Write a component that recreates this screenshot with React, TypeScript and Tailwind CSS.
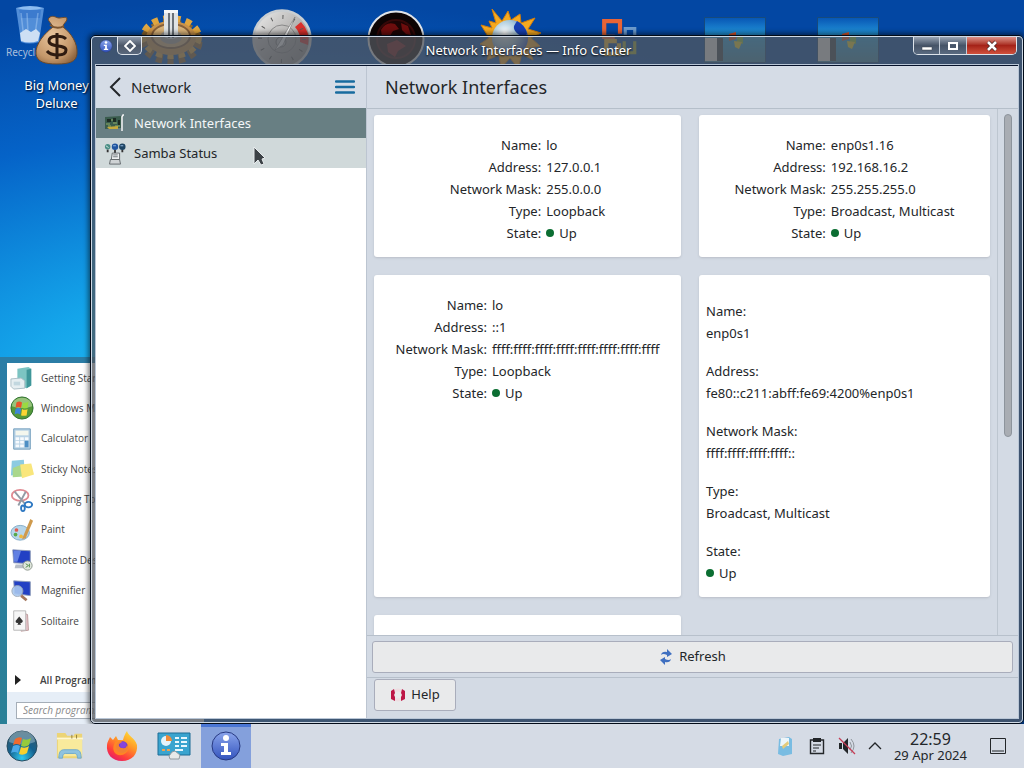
import React from "react";

type IconProps = { className?: string };

const RecycleBin = ({ className }: IconProps) => (
  <svg viewBox="0 0 32 40" className={className} aria-hidden="true">
    <path d="M2 3 L30 3 L25 37 Q15 40 7 37 Z" fill="#5f9ae0" opacity=".85" />
    <path d="M5 5h22l-1 8H7z" fill="#2e6fc8" opacity=".6" />
    <path d="M7 8l3 26M13 8l1 20M24 8l-3 22" stroke="#b9d8fa" strokeWidth="1.5" opacity=".4" />
    <path d="M6 28l6-4 5 3 5-3 4 4-2 8q-9 3-17 0z" fill="#cddff4" />
    <path d="M2 3q14-4 28 0q-14 4-28 0z" fill="#8dbcf0" />
  </svg>
);

const MoneyBag = ({ className }: IconProps) => (
  <svg viewBox="0 0 44 50" className={className} aria-hidden="true">
    <defs>
      <radialGradient id="bag" cx=".4" cy=".4" r=".7">
        <stop offset="0" stopColor="#e8c49c" />
        <stop offset=".7" stopColor="#c4976a" />
        <stop offset="1" stopColor="#8f6640" />
      </radialGradient>
    </defs>
    <path d="M18 12C15 6 11 5 15 2c4-2 6 1 9 1s8-2 8 1c0 3-4 4-4 8 8 6 15 16 14 27-1 8-8 10-20 10S2 47 1 39C0 29 10 18 18 12z" fill="url(#bag)" stroke="#6d4a2a" />
    <path d="M15 10q7 5 14 1" stroke="#7b5430" strokeWidth="2" fill="none" />
    <path d="M31 24c-4-4-17-4-17 2 0 7 17 3 17 9 0 7-15 6-19 1" stroke="#2f1b10" strokeWidth="3" fill="none" />
    <path d="M22 18v26" stroke="#2f1b10" strokeWidth="3" />
  </svg>
);

const Gear = ({ className }: IconProps) => (
  <svg viewBox="0 0 64 56" className={className} aria-hidden="true">
    <ellipse cx="32" cy="34" rx="27" ry="18" fill="none" stroke="#8a6630" strokeWidth="9" strokeDasharray="6 5" />
    <ellipse cx="32" cy="29" rx="27" ry="18" fill="none" stroke="#e0a640" strokeWidth="8" strokeDasharray="6 5" />
    <ellipse cx="32" cy="30" rx="25" ry="17" fill="#c9924a" />
    <ellipse cx="32" cy="28" rx="19" ry="12" fill="#d9b37a" stroke="#87603a" strokeWidth="2" />
    <ellipse cx="32" cy="29" rx="11" ry="7" fill="#a9a39a" />
    <path d="M25 2h14v27q-7 4-14 0z" fill="#dfe3e6" />
    <path d="M30 5v25M34 5v25" stroke="#444c54" strokeWidth="1.5" />
    <path d="M25 2h14v3H25z" fill="#f5f7f8" />
  </svg>
);

const Gauge = ({ className }: IconProps) => (
  <svg viewBox="0 0 60 60" className={className} aria-hidden="true">
    <defs>
      <linearGradient id="dial" x1="0" y1="0" x2="1" y2="1">
        <stop offset="0" stopColor="#efefef" />
        <stop offset=".6" stopColor="#aaa8a6" />
        <stop offset="1" stopColor="#858585" />
      </linearGradient>
    </defs>
    <circle cx="30" cy="30" r="28.5" fill="url(#dial)" stroke="#c9ced2" strokeWidth="2.5" />
    <path d="M43 18L49 13A26 26 0 0 1 56 36L48 33A19 19 0 0 0 43 18z" fill="#d8302c" />
    <circle cx="30" cy="30" r="22" fill="none" stroke="#5a5a5a" strokeWidth="4" strokeDasharray="1 10.5" />
    <circle cx="30" cy="30" r="14" fill="none" stroke="#888" strokeWidth="1" />
    <circle cx="29" cy="33" r="5" fill="#c6c6c6" stroke="#777" />
    <path d="M23 41L43 8L31 36z" fill="#fafafa" stroke="#707070" strokeWidth=".6" />
  </svg>
);

const RedOrb = ({ className }: IconProps) => (
  <svg viewBox="0 0 58 58" className={className} aria-hidden="true">
    <circle cx="29" cy="29" r="27.5" fill="#0c0404" stroke="#dfe3e8" strokeWidth="2" />
    <circle cx="29" cy="29" r="19" fill="#1d0404" stroke="#350808" strokeWidth="2" />
    <path d="M14 20q5-9 14-6l4 5-6 2-3 5-8 1zM34 13l7 3 3 9-5-1-4-4zM20 34l10-4 9 6-8 5-3 6-7-5z" fill="#6d0d0d" />
  </svg>
);

const SunGlobe = ({ className }: IconProps) => (
  <svg viewBox="0 0 64 64" className={className} aria-hidden="true">
    <defs>
      <radialGradient id="globe" cx=".35" cy=".35" r=".7">
        <stop offset="0" stopColor="#fff" />
        <stop offset=".5" stopColor="#a7c9dc" />
        <stop offset="1" stopColor="#2b57c0" />
      </radialGradient>
    </defs>
    <path d="M14 2L24 14L30 4L33 13L42 7L43 16L57 11L50 22L63 26L53 31L62 39L51 41L55 53L44 47L40 61L32 51L23 61L21 48L9 53L12 41L2 37L11 31L3 18L14 21L11 14L18 16z" fill="#f5a920" stroke="#d27d0c" />
    <circle cx="32" cy="31" r="18" fill="url(#globe)" />
    <path d="M39 14A18 18 0 0 1 49 27Q45 31 40 27T36 19z" fill="#1740b2" />
  </svg>
);

const OfficeLogo = ({ className }: IconProps) => (
  <svg viewBox="0 0 38 38" className={className} aria-hidden="true" fill="none" strokeWidth="4">
    <path d="M14 18H4V3h15v12" stroke="#e86436" />
    <path d="M24 16V10h9v8" stroke="#6d9bcc" strokeWidth="3" />
    <path d="M16 22H6v12h12V24" stroke="#f0b92c" />
    <path d="M23 22v11h10V22" stroke="#a0ad35" strokeWidth="3" />
  </svg>
);

const Thumb = ({ className }: IconProps) => (
  <svg viewBox="0 0 62 46" className={className} aria-hidden="true">
    <defs>
      <linearGradient id="wall" x1="0" y1="0" x2="0" y2="1">
        <stop offset="0" stopColor="#0755b4" />
        <stop offset=".45" stopColor="#28a1e0" />
        <stop offset="1" stopColor="#3c87a8" />
      </linearGradient>
    </defs>
    <path d="M.5.5h61v45H.5z" fill="url(#wall)" stroke="#164a7c" />
    <path d="M1 21h12v23H1z" fill="#eceae7" />
    <path d="M13 21h6v23h-6z" fill="#39434e" />
    <path d="M25 17l7-2v7l-7 2z" fill="#e0562a" />
    <path d="M33 18l6 2v7l-6-2z" fill="#86c440" />
    <path d="M30 24l8 1-3 7-4-2z" fill="#eed72e" />
  </svg>
);

const WindowsOrb = ({ className }: IconProps) => (
  <svg viewBox="0 0 32 32" className={className} aria-hidden="true">
    <defs>
      <radialGradient id="orb" cx=".5" cy=".9" r=".9">
        <stop offset="0" stopColor="#31c9f0" />
        <stop offset=".5" stopColor="#14618f" />
        <stop offset="1" stopColor="#365a6c" />
      </radialGradient>
    </defs>
    <circle cx="16" cy="16" r="15" fill="url(#orb)" stroke="#264c61" />
    <path d="M3 12a13 11 0 0 1 26 0q-13 5-26 0z" fill="#dbeaf0" opacity=".35" />
    <path d="M9 9q4-3 7-1l-2 7q-3-2-7 0z" fill="#ef6a2d" />
    <path d="M17 9q4 2 8-1l-2 7q-4 3-8 1z" fill="#95ca3c" />
    <path d="M7 16q4-2 7 0l-2 7q-3-2-7 0z" fill="#4aa8e8" />
    <path d="M15 17q4 2 8-1l-2 7q-4 3-8 1z" fill="#fad02e" />
  </svg>
);

const GreenOrb = ({ className }: IconProps) => (
  <svg viewBox="0 0 26 26" className={className} aria-hidden="true">
    <circle cx="13" cy="13" r="12" fill="#55993b" stroke="#2b6c2e" />
    <path d="M2 11a11 9 0 0 1 22 0q-11 4-22 0z" fill="#c3e0a9" opacity=".6" />
    <path d="M7 7q3-2 6 0l-1 6q-3-2-6 0z" fill="#e8542a" />
    <path d="M14 7q3 1 6-1l-1 7q-3 1-6 0z" fill="#9ada40" />
    <path d="M6 14q3-2 6 0l-1 6q-3-2-6 0z" fill="#3d86d8" />
    <path d="M13 14q3 2 6 0l-1 7q-3 1-6 0z" fill="#fcd432" />
  </svg>
);

const GettingStarted = ({ className }: IconProps) => (
  <svg viewBox="0 0 26 26" className={className} aria-hidden="true">
    <path d="M8 3l12-2 3 2v18l-5 3-10-3z" fill="#7cc4c2" />
    <path d="M18 4l5-1v18l-5 3z" fill="#3f9699" />
    <path d="M1 14l11-1 4 3v8l-12 1-3-3z" fill="#e6eef1" stroke="#a9bcc4" />
    <path d="M4 17h7v4H4z" fill="#c2d7df" />
  </svg>
);

const Calculator = ({ className }: IconProps) => (
  <svg viewBox="0 0 26 26" className={className} aria-hidden="true">
    <path d="M4 2h18v22H4z" fill="#b9d3e6" stroke="#6d9abb" />
    <path d="M6 4h14v5H6z" fill="#f4f7ee" />
    <path d="M6 11h4v3H6zM11 11h4v3h-4zM16 11h4v3h-4zM6 15h4v3H6zM11 15h4v3h-4zM6 19h4v3H6zM11 19h4v3h-4z" fill="#f7fbfe" />
    <path d="M16 15h4v7h-4z" fill="#4e8fc4" />
  </svg>
);

const StickyNotes = ({ className }: IconProps) => (
  <svg viewBox="0 0 26 26" className={className} aria-hidden="true">
    <path d="M2 4l13-1 1 15-15 2z" fill="#8ccbe2" />
    <path d="M3 12l10-4 2 13-12 1z" fill="#a9d78c" />
    <path d="M11 8l12-1 3 12-13 4z" fill="#f9e67c" />
  </svg>
);

const Snipping = ({ className }: IconProps) => (
  <svg viewBox="0 0 26 26" className={className} aria-hidden="true" fill="none">
    <ellipse cx="11" cy="8" rx="9" ry="6" stroke="#e08a92" strokeWidth="2" />
    <path d="M5 4l11 13M17 4l-8 15" stroke="#929ba5" strokeWidth="2" />
    <ellipse cx="20" cy="18" rx="4" ry="3" stroke="#2e78c2" strokeWidth="2" />
    <ellipse cx="14" cy="22" rx="2" ry="3" stroke="#2e78c2" strokeWidth="2" />
  </svg>
);

const PaintIcon = ({ className }: IconProps) => (
  <svg viewBox="0 0 26 26" className={className} aria-hidden="true">
    <ellipse cx="11" cy="16" rx="10" ry="8" fill="#b7d6ea" stroke="#7fa9c6" />
    <circle cx="7" cy="13" r="2" fill="#e2584c" />
    <circle cx="6" cy="18" r="2" fill="#58a849" />
    <circle cx="12" cy="20" r="2" fill="#f0b93a" />
    <path d="M22 1l3 2-8 19-4 1z" fill="#cf9a4d" />
  </svg>
);

const RemoteDesktop = ({ className }: IconProps) => (
  <svg viewBox="0 0 26 26" className={className} aria-hidden="true">
    <path d="M3 2l19 1v14L4 16z" fill="#2240c4" stroke="#8e9cb8" />
    <path d="M4 3l8 0-4 12-4 0z" fill="#7d9bf0" opacity=".7" />
    <path d="M6 18l10 0 2 4H5z" fill="#b8bec8" />
    <circle cx="19" cy="19" r="5" fill="#dfe6dc" stroke="#8b958b" />
    <path d="M17 17l3 2-3 2M21 17v4" stroke="#4d8a46" fill="none" />
  </svg>
);

const Magnifier = ({ className }: IconProps) => (
  <svg viewBox="0 0 26 26" className={className} aria-hidden="true">
    <path d="M4 2l18 1v15L5 16z" fill="#2240c4" stroke="#8e9cb8" />
    <circle cx="8" cy="13" r="6" fill="#a9c8f0" stroke="#9aa6b4" opacity=".9" />
    <path d="M12 18l6 5" stroke="#a3765c" strokeWidth="3" />
  </svg>
);

const Solitaire = ({ className }: IconProps) => (
  <svg viewBox="0 0 26 26" className={className} aria-hidden="true">
    <path d="M13 4l6 2 1 17-8 1z" fill="#e6c3c9" stroke="#b99" />
    <path d="M4 2h13v21H4z" fill="#f6f6f6" stroke="#b5b5b5" />
    <path d="M10 8l4 5q-1 3-3 2l1 2H8l1-2q-3 1-3-2z" fill="#333" />
  </svg>
);

const Folder = ({ className }: IconProps) => (
  <svg viewBox="0 0 30 30" className={className} aria-hidden="true">
    <path d="M1 4V1h9l2 3h7l1-2h8v26H1z" fill="#ecd476" />
    <path d="M2 8h26v18H2z" fill="#f8ea9c" />
    <path d="M1 7h28" stroke="#fff7cf" strokeWidth="2" />
    <path d="M17 3v4M22 3v4" stroke="#8f7c39" />
    <path d="M3 28q0-9 5-9h14q5 0 5 9h-4q0-5-3-5H10q-3 0-3 5z" fill="#8fc3df" stroke="#6fa9cb" />
  </svg>
);

const Firefox = ({ className }: IconProps) => (
  <svg viewBox="0 0 32 32" className={className} aria-hidden="true">
    <defs>
      <linearGradient id="fox" x1=".8" y1="0" x2=".2" y2="1">
        <stop offset="0" stopColor="#ffe03a" />
        <stop offset=".4" stopColor="#ff9626" />
        <stop offset=".75" stopColor="#ff3c3c" />
        <stop offset="1" stopColor="#e01870" />
      </linearGradient>
    </defs>
    <path d="M4 7l3 3 3-4 2 4 5 0c1-4 2-6 4-9 1 5 8 7 10 14 1 9-5 16-15 16S0 24 1 15C1 12 3 10 4 7z" fill="url(#fox)" />
    <circle cx="16" cy="17" r="6" fill="#6e3bd0" />
    <path d="M9 12q4-3 8 0l-4 2q-1 3 3 4 5 1 5-4 3 6-1 9-5 4-10 1-5-4-1-12z" fill="#ff8b22" opacity=".9" />
    <circle cx="17" cy="15" r="3" fill="#8744dc" />
  </svg>
);

const ControlPanel = ({ className }: IconProps) => (
  <svg viewBox="0 0 34 28" className={className} aria-hidden="true">
    <path d="M1 1h32v22H1z" fill="#3aa4cf" stroke="#1d6c96" />
    <circle cx="9" cy="9" r="5" fill="#e6f3fa" />
    <path d="M9 9V3a6 6 0 0 1 6 6z" fill="#f08a38" />
    <path d="M18 6h4M24 6h6M18 10h4M24 10h6M18 14h4M24 14h6M18 18h8" stroke="#e8f7fd" strokeWidth="2" />
    <path d="M5 18h3M10 18h3" stroke="#f1a24f" strokeWidth="2" />
    <path d="M12 24l3-4 3-1 5 4-1 4H13z" fill="#e8e9e9" stroke="#929aa0" />
  </svg>
);

const InfoBadge = ({ className }: IconProps) => (
  <svg viewBox="0 0 32 32" className={className} aria-hidden="true">
    <defs>
      <linearGradient id="info" x1="0" y1="0" x2="0" y2="1">
        <stop offset="0" stopColor="#8aa5ec" />
        <stop offset="1" stopColor="#3353bd" />
      </linearGradient>
    </defs>
    <circle cx="16" cy="16" r="14" fill="url(#info)" stroke="#283a82" strokeWidth="1" />
    <circle cx="16" cy="8" r="3" fill="#fff" />
    <path d="M11 13h7v9h3v3H11v-3h3v-6h-3z" fill="#fff" />
  </svg>
);

const NetworkCard = ({ className }: IconProps) => (
  <svg viewBox="0 0 22 20" className={className} aria-hidden="true">
    <path d="M1 3l16-1v12L1 15z" fill="#3a5c4d" />
    <path d="M3 5h4v3H3zM9 4h3v4H9zM14 6h2v5h-2z" fill="#1c2b24" />
    <path d="M2 10h4M4 12h3M9 9h4M11 12h5M8 5v2" stroke="#8fac68" />
    <path d="M3 13l11-1v3H5z" fill="#c5a93c" />
    <path d="M20 1h-1l-1 2v14" fill="none" stroke="#f4f5f5" strokeWidth="1.500" />
  </svg>
);

const SambaIcon = ({ className }: IconProps) => (
  <svg viewBox="0 0 24 24" className={className} aria-hidden="true">
    <path d="M4 7v3M12 7v4M20 7v3" stroke="#333" strokeWidth="2" fill="none" />
    <circle cx="4" cy="4" r="3" fill="#4b8f86" />
    <path d="M2 3l3 2" stroke="#d8ebe4" />
    <circle cx="12" cy="4" r="3.5" fill="#2156a0" />
    <circle cx="20" cy="4" r="3.5" fill="#1d4463" />
    <path d="M10 3h3M18 3h3" stroke="#9cc4ee" />
    <path d="M9 11h8v7H8z" fill="#eceff0" stroke="#5e6568" />
    <path d="M10 13h5M10 15h5" stroke="#6a7276" />
    <path d="M7 18h10l1 5H6z" fill="#cfd3d5" stroke="#5e6568" />
  </svg>
);

const desktopIcons: { id: string; node: React.ReactNode; place: string }[] = [
  { id: "bin", node: <RecycleBin className="h-10 w-8" />, place: "left-[14px] top-[5px]" },
  { id: "gear", node: <Gear className="h-14 w-16" />, place: "left-[139px] top-[8px]" },
  { id: "gauge", node: <Gauge className="size-[60px]" />, place: "left-[252px] top-[9px]" },
  { id: "orb", node: <RedOrb className="size-[58px]" />, place: "left-[367px] top-[10px]" },
  { id: "sun", node: <SunGlobe className="h-16 w-16" />, place: "left-[478px] top-[7px]" },
  { id: "office", node: <OfficeLogo className="size-10" />, place: "left-[600px] top-[18px]" },
  { id: "thumb1", node: <Thumb className="h-[46px] w-[62px]" />, place: "left-[704px] top-[17px]" },
  { id: "thumb2", node: <Thumb className="h-[46px] w-[62px]" />, place: "left-[817px] top-[17px]" },
];

const startItems = [
  { label: "Getting Started", Icon: GettingStarted },
  { label: "Windows Media", Icon: GreenOrb },
  { label: "Calculator", Icon: Calculator },
  { label: "Sticky Notes", Icon: StickyNotes },
  { label: "Snipping Tool", Icon: Snipping },
  { label: "Paint", Icon: PaintIcon },
  { label: "Remote Desktop", Icon: RemoteDesktop },
  { label: "Magnifier", Icon: Magnifier },
  { label: "Solitaire", Icon: Solitaire },
];

function StartMenu() {
  return (
    <div className="absolute bottom-0 left-0 flex h-[367px] w-[204px] flex-col bg-gradient-to-b from-[#2b7da6] to-[#2a8097] pl-[7px] pt-[6px] font-['Open_Sans',sans-serif] text-[10px] text-[#444]">
      <ul className="flex flex-1 flex-col justify-between bg-white pb-[35px] pt-[3px]">
        {startItems.map(({ label, Icon }) => (
          <li key={label} className="flex h-6 items-center gap-[7px] whitespace-nowrap pl-[3px]">
            <Icon className="size-6 shrink-0" />
            {label}
          </li>
        ))}
      </ul>
      <div className="flex h-6 items-center gap-[19px] bg-white pl-2 font-semibold">
        <svg viewBox="0 0 6 10" className="h-[10px] w-[6px]" aria-hidden="true">
          <path d="M0 0l6 5-6 5z" fill="#222" />
        </svg>
        All Programs
      </div>
      <div className="flex h-8 items-center bg-[#e6eef7] pl-[9px] pt-1">
        <input
          aria-label="Search programs"
          placeholder="Search programs and files"
          className="h-[17px] w-[170px] border border-[#a5aeb8] bg-white px-[6px] text-[10px] italic placeholder:text-[#888]"
        />
      </div>
    </div>
  );
}

type Iface = { name: string; address: string; mask: string; type: string; stacked?: boolean };

const interfaces: Iface[] = [
  { name: "lo", address: "127.0.0.1", mask: "255.0.0.0", type: "Loopback" },
  { name: "enp0s1.16", address: "192.168.16.2", mask: "255.255.255.0", type: "Broadcast, Multicast" },
  { name: "lo", address: "::1", mask: "ffff:ffff:ffff:ffff:ffff:ffff:ffff:ffff", type: "Loopback" },
  { name: "enp0s1", address: "fe80::c211:abff:fe69:4200%enp0s1", mask: "ffff:ffff:ffff:ffff::", type: "Broadcast, Multicast", stacked: true },
];

function InterfaceCard({ item }: { item: Iface }) {
  const rows: [string, React.ReactNode][] = [
    ["Name:", item.name],
    ["Address:", item.address],
    ["Network Mask:", item.mask],
    ["Type:", item.type],
    [
      "State:",
      <span key="state" className="flex items-center gap-[5px]">
        <span className="size-2 rounded-full bg-[#0b6e32]" />
        Up
      </span>,
    ],
  ];
  if (item.stacked) {
    return (
      <dl className="flex flex-col gap-4 rounded-[3px] bg-white px-[7px] pb-[13px] pt-[25px] shadow-sm">
        {rows.map(([k, v]) => (
          <div key={k}>
            <dt>{k}</dt>
            <dd>{v}</dd>
          </div>
        ))}
      </dl>
    );
  }
  return (
    <dl className="grid grid-cols-[auto_auto] content-start justify-center gap-x-[5px] rounded-[3px] bg-white pb-[13px] pt-[19px] shadow-sm">
      {rows.map(([k, v]) => (
        <React.Fragment key={k}>
          <dt className="text-right">{k}</dt>
          <dd>{v}</dd>
        </React.Fragment>
      ))}
    </dl>
  );
}

function TitleBar() {
  return (
    <header className="relative flex h-7 items-start justify-between">
      <div className="flex items-start gap-1 pl-[3px]">
        <InfoBadge className="mt-[2px] size-[14px]" />
        <button aria-label="Keep above" className="flex h-[18px] w-[25px] items-center justify-center rounded-b-[5px] border border-t-0 border-[#dde3ea] bg-gradient-to-b from-[#8f9aab] via-[#4d5869] to-[#59677c]">
          <svg viewBox="0 0 12 12" className="size-3" aria-hidden="true">
            <path d="M6 1l5 5-5 5-5-5z" fill="none" stroke="#fff" strokeWidth="1.8" />
          </svg>
        </button>
      </div>
      <h1 className="absolute inset-x-0 top-[1px] pr-[57px] text-center text-[13px] leading-6 text-white [text-shadow:0_1px_2px_#000]">
        Network Interfaces — Info Center
      </h1>
      <div className="relative mr-[1px] flex h-[18px] overflow-hidden rounded-b-[5px] border border-t-0 border-[#dde3ea]">
        <button aria-label="Minimize" className="flex w-[26px] items-center justify-center border-r border-[#c3ccd8] bg-gradient-to-b from-[#9aa5b4] via-[#465468] to-[#5a6a80]">
          <svg viewBox="0 0 12 12" className="size-3" aria-hidden="true">
            <path d="M1 7h10v3H1z" fill="#fff" stroke="#39424e" strokeWidth=".5" />
          </svg>
        </button>
        <button aria-label="Maximize" className="flex w-[27px] items-center justify-center border-r border-[#c3ccd8] bg-gradient-to-b from-[#9aa5b4] via-[#465468] to-[#5a6a80]">
          <svg viewBox="0 0 12 12" className="size-3" aria-hidden="true">
            <path d="M2 3h8v6H2z" fill="none" stroke="#fff" strokeWidth="2" />
          </svg>
        </button>
        <button aria-label="Close" className="flex w-[49px] items-center justify-center bg-gradient-to-b from-[#dc9087] via-[#a52218] to-[#d0503c]">
          <svg viewBox="0 0 12 12" className="size-3" aria-hidden="true">
            <path d="M2 2l8 8M10 2l-8 8" stroke="#422" strokeWidth="4" />
            <path d="M2 2l8 8M10 2l-8 8" stroke="#fff" strokeWidth="2.6" />
          </svg>
        </button>
      </div>
    </header>
  );
}

function Sidebar() {
  return (
    <nav className="flex w-[270px] shrink-0 flex-col bg-white">
      <div className="flex h-[42px] items-center bg-[#d5dce6] pl-[13px] pr-[11px]">
        <button className="flex items-center gap-[10px] text-[15px]">
          <svg viewBox="0 0 12 20" className="h-5 w-3" aria-hidden="true">
            <path d="M11 1L2 10l9 9" fill="none" stroke="#232629" strokeWidth="2" />
          </svg>
          Network
        </button>
        <button aria-label="Menu" className="ml-auto">
          <svg viewBox="0 0 20 16" className="h-4 w-5" aria-hidden="true">
            <path d="M1 2.500h18M1 8h18M1 13.500h18" stroke="#176b9f" strokeWidth="2.400" strokeLinecap="round" />
          </svg>
        </button>
      </div>
      <a href="#interfaces" aria-current="page" className="flex h-[30px] items-center gap-2 bg-[#687f83] pl-2 pt-0.5 text-[#f4f7f8]">
        <NetworkCard className="h-5 w-[22px]" />
        Network Interfaces
      </a>
      <a href="#samba" className="flex h-[30px] items-center gap-2 bg-[#d0d9da] pl-2 pt-0.5">
        <SambaIcon className="size-[22px]" />
        Samba Status
      </a>
    </nav>
  );
}

function InfoWindow() {
  return (
    <div className="absolute bottom-0 left-[90px] right-0 top-[35px] flex rounded-[5px] border border-[#020b18] shadow-[0_0_5px_2px_rgba(0,0,0,0.5)]">
      <div className="flex min-w-0 flex-1 flex-col rounded-[4px] border border-[#d0dae6] bg-[#51565c]/75 px-1 pb-1">
        <TitleBar />
        <div className="flex min-h-0 flex-1 border-t border-[#06122a] bg-[#d3dae4] outline-1 outline-[#b9c6d6]">
          <Sidebar />
          <main className="flex min-w-0 flex-1 flex-col border-l border-[#bcc5d1]">
            <h2 className="flex h-[43px] shrink-0 items-center border-b border-[#b5bfca] bg-[#d5dce6] pl-[18px] text-[18px]">
              Network Interfaces
            </h2>
            <div className="flex min-h-0 flex-1">
              <div className="min-w-0 flex-1 overflow-hidden px-[7px] pt-[6px] leading-[22px]">
                <div className="grid grid-cols-[307fr_291fr] gap-[18px]">
                  {interfaces.map((item) => (
                    <InterfaceCard key={item.address} item={item} />
                  ))}
                  <div className="h-36 rounded-[3px] bg-white shadow-sm" />
                </div>
              </div>
              <div className="w-[21px] border-l border-[#bdc6d0] pl-[6px] pt-[5px]">
                <div className="h-[62%] w-2 rounded-full border border-[#8d949c] bg-[#a9adb3]" />
              </div>
            </div>
            <div className="border-t border-[#b7c0cb] px-[5px] pb-1 pt-[5px]">
              <button className="flex h-8 w-full items-center justify-center gap-[6px] rounded-[3px] border border-[#a9adbb] bg-[#e9eaeb]">
                <svg viewBox="0 0 14 16" className="h-4 w-[14px]" aria-hidden="true">
                  <path d="M2 6Q3 2 8 3V0l5 5-5 3V6Q4 4 2 6z" fill="#3f6fc0" />
                  <path d="M12 10Q11 14 6 13v3l-5-5 5-3v2q4 2 6 0z" fill="#3f6fc0" />
                </svg>
                Refresh
              </button>
            </div>
            <div className="border-t border-[#b7c0cb] px-[7px] pb-[7px] pt-[1px]">
              <button className="flex h-8 w-[82px] items-center justify-center gap-[5px] rounded-[3px] border border-[#a9adbb] bg-[#e9eaeb]">
                <svg viewBox="0 0 16 14" className="h-[14px] w-4" aria-hidden="true">
                  <circle cx="8" cy="7" r="5" fill="none" stroke="#eedde1" strokeWidth="3" />
                  <path d="M4 1L1 3v8l4 2V9L4 7l1-2zM12 1l3 2v8l-4 2V9l1-2-1-2z" fill="#bd1746" />
                </svg>
                Help
              </button>
            </div>
          </main>
        </div>
      </div>
    </div>
  );
}

const launchers = [
  { label: "Start", Icon: WindowsOrb, size: "size-8", active: false },
  { label: "Files", Icon: Folder, size: "size-7", active: false },
  { label: "Firefox", Icon: Firefox, size: "size-8", active: false },
  { label: "Control Panel", Icon: ControlPanel, size: "h-7 w-[34px]", active: false },
  { label: "Info Center", Icon: InfoBadge, size: "size-8", active: true },
];

function Taskbar() {
  return (
    <footer className="flex h-11 shrink-0 items-center justify-between bg-[#d5dbe5] pr-[17px]">
      <div className="flex h-full gap-[2px]">
        {launchers.map(({ label, Icon, size, active }) => (
          <button
            key={label}
            aria-label={label}
            className={
              active
                ? "flex w-[50px] items-center justify-center border-t-[3px] border-[#4a76d4] bg-[#84a0dc] pb-[3px]"
                : label === "Start"
                  ? "flex w-[43px] items-center justify-center"
                  : "flex w-[50px] items-center justify-center"
            }
          >
            <Icon className={size} />
          </button>
        ))}
      </div>
      <div className="flex items-center">
        <button aria-label="Notes" className="mr-4">
          <svg viewBox="0 0 16 20" className="h-5 w-4" aria-hidden="true">
            <path d="M2 3l10-2 3 2v15l-9 2-5-2z" fill="#79bce2" />
            <path d="M4 2h8v8H3z" fill="#edf5f9" />
            <path d="M5 10l6-5 1 3-6 5z" fill="#e4ca7a" />
          </svg>
        </button>
        <button aria-label="Clipboard" className="mr-[13px]">
          <svg viewBox="0 0 16 18" className="h-[18px] w-4" aria-hidden="true">
            <path d="M1.500 3h13v13.500h-13z" fill="none" stroke="#232629" strokeWidth="1.400" />
            <path d="M4 1h8v4H4z" fill="#232629" />
            <path d="M4 8h8M4 11h6M4 14h3" stroke="#232629" />
          </svg>
        </button>
        <button aria-label="Muted" className="mr-3">
          <svg viewBox="0 0 18 18" className="size-[18px]" aria-hidden="true">
            <path d="M1 6h3v6H1zM5 6l5-5v16l-5-5z" fill="#232629" />
            <path d="M12 5q3 4 0 8M13 2q6 7 0 14" stroke="#8f959c" fill="none" />
            <path d="M1 1l16 16" stroke="#c73d56" strokeWidth="1.3" />
          </svg>
        </button>
        <button aria-label="Show hidden icons" className="mr-3">
          <svg viewBox="0 0 14 10" className="h-[10px] w-[14px]" aria-hidden="true">
            <path d="M1 8l6-6 6 6" fill="none" stroke="#232629" strokeWidth="1.3" />
          </svg>
        </button>
        <div className="mr-[22px] text-center">
          <div className="text-[16px] leading-[18px]">22:59</div>
          <div className="text-[13px] leading-[14px]">29 Apr 2024</div>
        </div>
        <button aria-label="Show desktop">
          <svg viewBox="0 0 18 18" className="size-[18px]" aria-hidden="true">
            <path d="M1.500 1.500h15v15h-15zM3 14h12" fill="none" stroke="#232629" />
          </svg>
        </button>
      </div>
    </footer>
  );
}

export default function App() {
  return (
    <div className="flex h-screen flex-col overflow-hidden font-['Noto_Sans',sans-serif] text-[13px] text-[#232629]">
      <div className="relative min-h-0 flex-1 overflow-hidden bg-[radial-gradient(ellipse_80%_55%_at_25%_55%,#30c8f8_0%,#14a5ea_30%,#0563c8_68%,#0347a3_100%)]">
        {desktopIcons.map(({ id, node, place }) => (
          <div key={id} className={"absolute " + place}>
            {node}
          </div>
        ))}
        <span className="absolute left-[6px] top-[46px] text-[10px] leading-3 text-[#a9bfdc]">Recycle</span>
        <div className="absolute left-[11px] top-[15px] flex w-[91px] flex-col items-center">
          <MoneyBag className="h-[50px] w-11" />
          <span className="mt-[11px] text-center text-[13px] leading-[18px] text-white [text-shadow:1px_1px_2px_#001]">
            Big Money Deluxe
          </span>
        </div>
        <StartMenu />
        <InfoWindow />
        <svg viewBox="0 0 13 20" className="absolute left-[253px] top-[146px] h-5 w-[13px]" aria-hidden="true">
          <path d="M1 1v17l4-4 3 5 3-1-2-5 3-1z" fill="#3c4246" stroke="#e8ecee" strokeWidth="1" />
        </svg>
      </div>
      <Taskbar />
    </div>
  );
}
